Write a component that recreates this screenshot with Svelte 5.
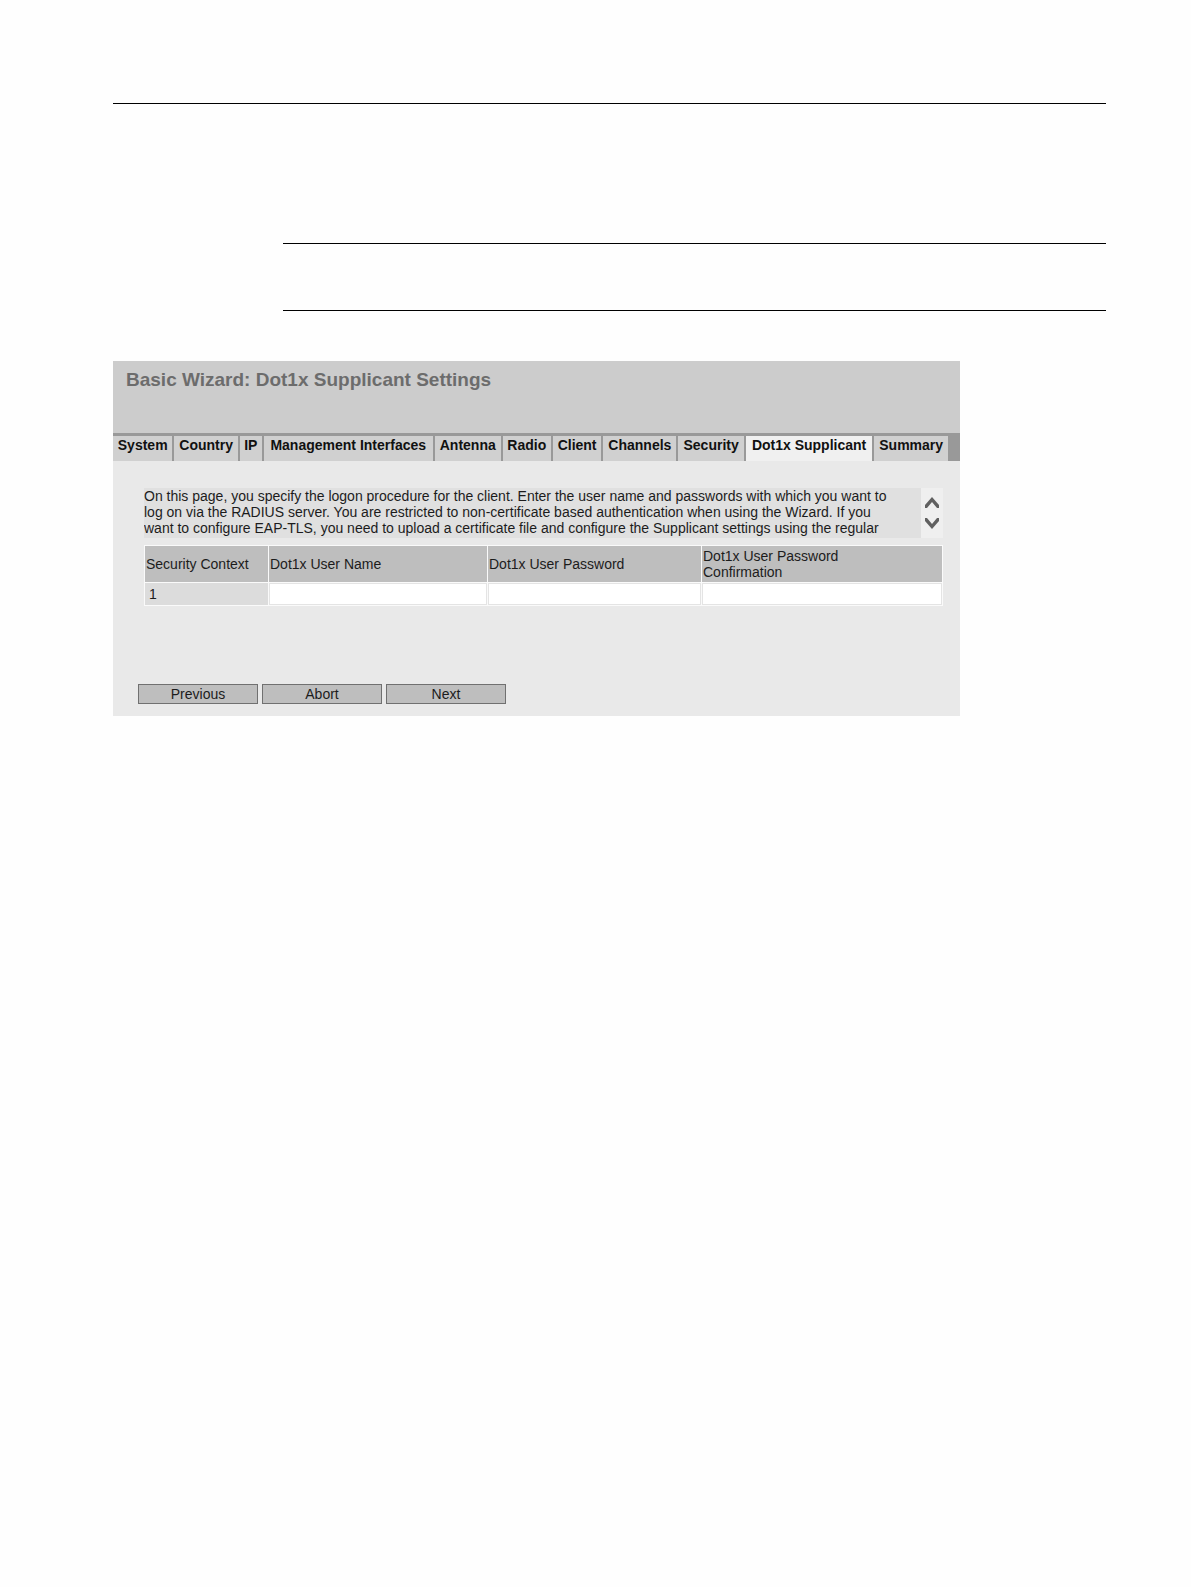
<script lang="ts">
	const tabs = [
		'System',
		'Country',
		'IP',
		'Management Interfaces',
		'Antenna',
		'Radio',
		'Client',
		'Channels',
		'Security',
		'Dot1x Supplicant',
		'Summary'
	];

	let activeTab = $state('Dot1x Supplicant');
	let contexts = $state([{ id: 1, userName: '', password: '', confirmation: '' }]);
	let helpText: HTMLElement;

	function scrollHelp(amount: number) {
		helpText.scrollBy({ top: amount });
	}

	function selectTab(event: MouseEvent, tab: string) {
		event.preventDefault();
		activeTab = tab;
	}
</script>

<div class="page">
	<hr />
	<div class="note">
		<hr />
		<hr />
	</div>

	<main class="wizard">
		<header>
			<h1>Basic Wizard: Dot1x Supplicant Settings</h1>
		</header>

		<nav>
			<!-- longer labels take a larger share of the spare width -->
			{#each tabs as tab}
				<a
					href="#wizard"
					class:active={tab === activeTab}
					aria-current={tab === activeTab ? 'step' : undefined}
					style:flex-grow={tab.length}
					onclick={(e) => selectTab(e, tab)}>{tab}</a
				>
			{/each}
		</nav>

		<form onsubmit={(e) => e.preventDefault()}>
			<div class="help">
				<p bind:this={helpText}>
					On this page, you specify the logon procedure for the client. Enter the user name and passwords with which you want to<br />
					log on via the RADIUS server. You are restricted to non-certificate based authentication when using the Wizard. If you<br />
					want to configure EAP-TLS, you need to upload a certificate file and configure the Supplicant settings using the regular
				</p>
				<div class="scroller">
					<button type="button" aria-label="Scroll up" onclick={() => scrollHelp(-16)}>
						<svg viewBox="0 0 14 11" width="14" height="11"><path d="M0 8 7 0l7 8v3h-2L7 5l-5 6H0z" /></svg>
					</button>
					<button type="button" aria-label="Scroll down" onclick={() => scrollHelp(16)}>
						<svg viewBox="0 0 14 11" width="14" height="11"><path d="M0 3 7 11l7-8V0h-2L7 6 2 0H0z" /></svg>
					</button>
				</div>
			</div>

			<table>
				<colgroup>
					<col class="col-context" />
					<col class="col-name" />
					<col class="col-password" />
					<col class="col-confirm" />
				</colgroup>
				<thead>
					<tr>
						<th scope="col">Security Context</th>
						<th scope="col" id="user-name">Dot1x User Name</th>
						<th scope="col" id="password">Dot1x User Password</th>
						<th scope="col" id="confirmation">Dot1x User Password<br />Confirmation</th>
					</tr>
				</thead>
				<tbody>
					{#each contexts as context}
						<tr>
							<td class="context">{context.id}</td>
							<td><input type="text" aria-labelledby="user-name" bind:value={context.userName} /></td>
							<td><input type="password" aria-labelledby="password" bind:value={context.password} /></td>
							<td><input type="password" aria-labelledby="confirmation" bind:value={context.confirmation} /></td>
						</tr>
					{/each}
				</tbody>
			</table>

			<div class="actions">
				<button type="button">Previous</button>
				<button type="button">Abort</button>
				<button type="submit">Next</button>
			</div>
		</form>
	</main>
</div>

<style>
	:global(body) {
		background: #fefefe;
	}

	.page {
		padding: 103px 85px 0 113px;
		font-family: 'Liberation Sans', Arial, sans-serif;
		font-size: 14px;
		line-height: 16px;
		color: #1c1c1c;
	}

	hr {
		height: 1px;
		margin: 0;
		border: 0;
		background: #000;
	}

	.note {
		display: grid;
		gap: 66px;
		margin: 139px 0 50px 170px;
	}

	.wizard {
		max-width: 847px;
		background: #e9e9e9;
	}

	header {
		height: 72px;
		box-sizing: border-box;
		padding: 8px 13px;
		background: #ccc;
	}

	h1 {
		margin: 0;
		font-size: 19px;
		line-height: 22px;
		color: #6c6c6c;
	}

	nav {
		display: flex;
		gap: 2px;
		padding: 3px 12px 0 0;
		background: #999;
	}

	nav a {
		height: 25px;
		box-sizing: border-box;
		padding: 1px 4px 0;
		background: #d0d0d0;
		font-weight: bold;
		color: #111;
		text-align: center;
		text-decoration: none;
		white-space: nowrap;
	}

	nav a.active {
		background: #f0f0f0;
	}

	form {
		padding: 27px 17px 12px 31px;
	}

	.help {
		display: flex;
		margin-bottom: 7px;
	}

	.help p {
		flex: 1;
		height: 50px;
		margin: 0;
		overflow: hidden;
		background: #e0e0e0;
	}

	.scroller {
		display: flex;
		flex-direction: column;
		justify-content: space-evenly;
		width: 22px;
		background: #efefef;
	}

	.scroller button {
		display: grid;
		place-items: center;
		padding: 1px 0;
		border: 0;
		background: none;
	}

	.scroller svg {
		fill: #606060;
	}

	table {
		width: 100%;
		table-layout: fixed;
		border-collapse: collapse;
	}

	.col-context {
		width: 124px;
	}

	.col-name {
		width: 219px;
	}

	.col-password {
		width: 214px;
	}

	th,
	td {
		padding: 0;
		border: 1px solid #fafafa;
		text-align: left;
	}

	th {
		height: 36px;
		padding-left: 1px;
		background: #bebebe;
		font-weight: normal;
	}

	td {
		height: 22px;
		background: #fff;
	}

	td.context {
		padding-left: 4px;
		background: #dcdcdc;
	}

	input {
		display: block;
		width: 100%;
		height: 22px;
		box-sizing: border-box;
		padding: 0 2px;
		border: 1px solid #e4e4e4;
		background: #fff;
		font: inherit;
	}

	.actions {
		display: flex;
		gap: 4px;
		margin: 78px 0 0 -6px;
	}

	.actions button {
		width: 120px;
		height: 20px;
		padding: 0;
		border: 1px solid #707070;
		background: #bebebe;
		font: inherit;
		color: inherit;
	}
</style>
